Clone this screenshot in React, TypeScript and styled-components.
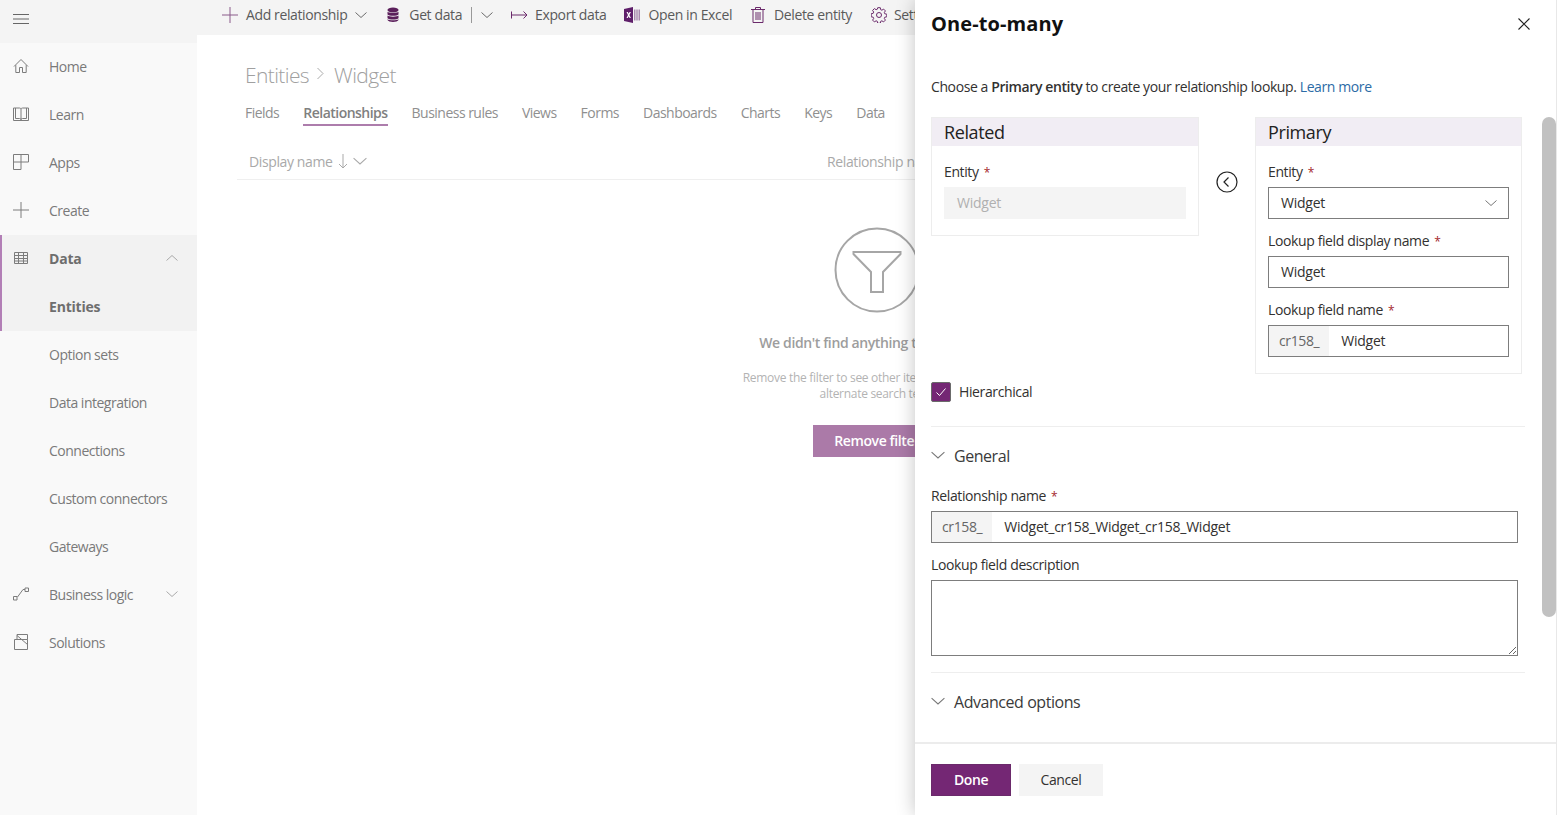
import styled, { createGlobalStyle } from "styled-components";

const GlobalStyle = createGlobalStyle`
  html, body {
    margin: 0;
    height: 100%;
    overflow: hidden;
    background: #fff;
    font-family: "Open Sans", "Noto Sans", sans-serif;
    font-size: 14px;
    letter-spacing: -0.38px;
  }
  * { box-sizing: border-box; }
`;

const Shell = styled.div`
  position: relative;
  display: flex;
  width: 1557px;
  height: 815px;
  overflow: hidden;
`;

/* sidebar */

const Sidebar = styled.nav`
  flex: 0 0 197px;
  background: #f9f9f9;
  letter-spacing: -0.5px;
`;

const MenuBar = styled.div`
  display: flex;
  align-items: center;
  height: 43px;
  padding-left: 13px;
  padding-bottom: 5px;
  background: #f4f4f4;
  color: #666;
`;

const NavGroup = styled.div`
  background: #f2f2f2;
  box-shadow: inset 2px 0 0 #b27fb6;
`;

const NavRow = styled.div<{ $bold?: boolean }>`
  display: flex;
  align-items: center;
  height: 48px;
  padding: 0 19px 2px 13px;
  color: ${(p) => (p.$bold ? "#6e6e6e" : "#7a7a7a")};
  font-weight: ${(p) => (p.$bold ? 700 : 400)};
  letter-spacing: ${(p) => (p.$bold ? "-0.2px" : "inherit")};
`;

const NavIcon = styled.span`
  display: flex;
  justify-content: center;
  width: 16px;
  margin-right: 20px;
  color: #7c7c7c;
`;

const NavLabel = styled.span`
  flex: 1;
  white-space: nowrap;
`;

const NavChevron = styled.span`
  display: flex;
  color: #a0a0a0;
`;

/* main */

const Main = styled.main`
  flex: 1;
  min-width: 0;
`;

const CommandBar = styled.div`
  display: flex;
  align-items: center;
  height: 35px;
  padding: 0 0 6px 25px;
  background: #f4f4f4;
  color: #5a5a5a;
  white-space: nowrap;
`;

const Command = styled.span<{ $gap?: number; $iconGap?: number }>`
  display: inline-flex;
  align-items: center;
  gap: ${(p) => p.$iconGap ?? 8}px;
  margin-right: ${(p) => p.$gap ?? 18}px;
`;

const CommandDivider = styled.span`
  width: 1px;
  height: 16px;
  margin-right: 9px;
  background: #999;
`;

const Content = styled.div`
  padding: 25px 0 0 40px;
`;

const Breadcrumb = styled.div`
  display: flex;
  align-items: center;
  height: 30px;
  padding-left: 8px;
  color: #a0a0a0;
  font-size: 21px;
  font-weight: 300;
  letter-spacing: -0.6px;
`;

const CrumbSeparator = styled.span`
  display: flex;
  margin: 0 10px 4px 8px;
`;

const Tabs = styled.div`
  display: flex;
  gap: 24px;
  margin-top: 13px;
  padding-left: 8px;
  letter-spacing: -0.52px;
`;

const Tab = styled.span<{ $active?: boolean }>`
  height: 23px;
  line-height: 20px;
  color: ${(p) => (p.$active ? "#808080" : "#8f8f8f")};
  font-weight: ${(p) => (p.$active ? 600 : 400)};
  border-bottom: ${(p) => (p.$active ? "2px solid #ad7dac" : "2px solid transparent")};
`;

const ListHead = styled.div`
  display: grid;
  grid-template-columns: 590px 1fr;
  align-items: center;
  height: 35px;
  margin-top: 19px;
  padding-bottom: 2px;
  border-bottom: 1px solid #efefef;
  color: #a9a9a9;
  white-space: nowrap;
`;

const SortColumn = styled.span`
  display: flex;
  align-items: center;
  gap: 5px;
  padding-left: 12px;
`;

const Empty = styled.div`
  display: flex;
  flex-direction: column;
  align-items: center;
  margin-left: -40px;
  padding-top: 47px;
`;

const EmptyTitle = styled.div`
  margin-top: 20px;
  color: #9d9d9d;
  font-weight: 600;
  line-height: 20px;
  white-space: nowrap;
`;

const EmptyText = styled.div`
  width: 290px;
  margin-top: 17px;
  color: #b3b3b3;
  font-size: 12px;
  letter-spacing: -0.3px;
  line-height: 16px;
  text-align: center;
`;

const RemoveButton = styled.div`
  display: flex;
  align-items: center;
  height: 32px;
  margin-top: 23px;
  padding: 0 21px 2px;
  background: #ab7aa8;
  color: #fff;
  font-weight: 600;
`;

/* panel */

const Panel = styled.aside`
  position: absolute;
  top: 0;
  right: 0;
  bottom: 0;
  display: flex;
  flex-direction: column;
  width: 642px;
  background: #fff;
  border-right: 1px solid #e8e8e8;
  box-shadow: 0 0 18px rgba(0, 0, 0, 0.24);
  color: #323130;
`;

const PanelHead = styled.header`
  display: flex;
  align-items: center;
  justify-content: space-between;
  height: 48px;
  padding: 0 26px 0 16px;
`;

const PanelTitle = styled.h1`
  margin: 0 0 1px;
  color: #111;
  font-size: 20px;
  font-weight: 700;
  letter-spacing: 0.1px;
`;

const PanelBody = styled.div`
  flex: 1;
  min-height: 0;
  padding: 29px 31px 0 16px;
  overflow: hidden;
`;

const Intro = styled.p`
  margin: 0;
  letter-spacing: -0.4px;
  line-height: 20px;
  strong { font-weight: 600; }
  a { color: #2c6ba6; }
`;

const Mapping = styled.div`
  display: grid;
  grid-template-columns: 268px 56px 267px;
  align-items: start;
  margin-top: 20px;
`;

const Card = styled.section`
  border: 1px solid #ededed;
`;

const CardHead = styled.h2`
  height: 28px;
  margin: 0;
  padding-left: 12px;
  background: #f1edf4;
  color: #222;
  font-size: 18px;
  font-weight: 400;
  line-height: 28px;
`;

const CardBody = styled.div`
  display: flex;
  flex-direction: column;
  gap: 12px;
  padding: 16px 12px 16px;
`;

const SwapCell = styled.div`
  display: flex;
  justify-content: center;
  padding-top: 54px;
  color: #222;
`;

const Field = styled.div`
  display: flex;
  flex-direction: column;
  gap: 5px;
`;

const Label = styled.label`
  height: 20px;
  color: #323130;
  line-height: 20px;
  white-space: nowrap;
`;

const Required = styled.span`
  margin-left: 5px;
  color: #a4262c;
  font-size: 12px;
  line-height: 0;
`;

const InputBox = styled.div<{ $disabled?: boolean }>`
  display: flex;
  align-items: center;
  height: 32px;
  background: ${(p) => (p.$disabled ? "#f4f4f4" : "#fff")};
  border: 1px solid ${(p) => (p.$disabled ? "transparent" : "#7d7d7d")};
  color: ${(p) => (p.$disabled ? "#b0b0b0" : "#323130")};
`;

const Prefix = styled.span`
  display: flex;
  align-items: center;
  height: 100%;
  padding: 0 10px 2px;
  background: #f4f4f4;
  color: #666;
`;

const InputValue = styled.span`
  flex: 1;
  padding: 0 12px 2px;
  letter-spacing: -0.25px;
`;

const SelectChevron = styled.span`
  display: flex;
  margin-right: 11px;
  color: #666;
`;

const CheckRow = styled.div`
  display: flex;
  align-items: center;
  gap: 8px;
  height: 20px;
  margin-top: 8px;
`;

const CheckText = styled.span`
  padding-bottom: 2px;
`;

const CheckBox = styled.span`
  display: flex;
  align-items: center;
  justify-content: center;
  width: 20px;
  height: 20px;
  background: #742774;
  border: 1px solid #6b6b6b;
  border-radius: 2px;
  color: #fff;
`;

const Divider = styled.hr<{ $top: number }>`
  height: 1px;
  margin: ${(p) => p.$top}px 0 0;
  background: #eee;
  border: 0;
`;

const SectionHead = styled.div`
  display: flex;
  align-items: center;
  gap: 9px;
  height: 24px;
  margin-top: 17px;
  color: #3a3a3a;
  font-size: 16px;
  letter-spacing: -0.45px;
`;

const SectionChevron = styled.span`
  display: flex;
  margin-bottom: 3px;
  color: #777;
`;

const SectionFields = styled.div`
  display: flex;
  flex-direction: column;
  gap: 12px;
  width: 587px;
  margin-top: 18px;
`;

const TextArea = styled.textarea`
  display: block;
  width: 100%;
  height: 76px;
  padding: 6px 12px;
  background: #fff;
  border: 1px solid #7d7d7d;
  border-radius: 0;
  outline: none;
  font: inherit;
  resize: vertical;
`;

const PanelFoot = styled.footer`
  display: flex;
  gap: 8px;
  height: 73px;
  padding: 20px 16px 0;
  border-top: 2px solid #ececec;
`;

const Button = styled.button<{ $primary?: boolean }>`
  height: 32px;
  padding: 0 0 1px;
  width: ${(p) => (p.$primary ? 80 : 84)}px;
  background: ${(p) => (p.$primary ? "#742774" : "#f4f4f4")};
  border: ${(p) => (p.$primary ? "1px solid #6b2a6b" : "none")};
  border-radius: 0;
  color: ${(p) => (p.$primary ? "#fff" : "#323130")};
  font: inherit;
  font-weight: ${(p) => (p.$primary ? 600 : 400)};
  letter-spacing: inherit;
`;

const ScrollThumb = styled.div`
  position: absolute;
  top: 117px;
  right: 0;
  width: 14px;
  height: 500px;
  background: #c1c1c1;
  border-radius: 7px;
`;

/* icons */

type IconProps = { size?: number; children: React.ReactNode; color?: string };

const Icon = ({ size = 16, children, color = "currentColor" }: IconProps) => (
  <svg width={size} height={size} viewBox="0 0 16 16" fill="none" stroke={color} strokeWidth={1} style={{ flex: "none" }}>
    {children}
  </svg>
);

const Chevron = ({ up, size = 12 }: { up?: boolean; size?: number }) => (
  <svg width={size} height={size} viewBox="0 0 12 12" fill="none" stroke="currentColor" strokeWidth={0.9} style={{ flex: "none" }}>
    <path d={up ? "M0.5 8.500 6 3.500l5.500 5" : "M0.5 3.500 6 8.500l5.500-5"} />
  </svg>
);

const HomeIcon = () => (
  <Icon><path d="M1 8.500 8 1.500l7 7M2.800 7.200v7.300h3.700v-5h3v5h3.700V7.200" /></Icon>
);
const BookIcon = () => (
  <Icon><path d="M.5 2h6c.8 0 1.500.4 1.500 1.200C8 2.400 8.700 2 9.500 2h6v12.500H.5zM8 3.200V14.500M2.500 2v10.500h4c.8 0 1.500.5 1.500 1 0-.5.7-1 1.500-1h4V2" /></Icon>
);
const AppsIcon = () => (
  <Icon><path d="M.5.500h15v7.500H8v7.500H.5zM.5 8H8M8 .5V8" /></Icon>
);
const PlusIcon = ({ color }: { color?: string }) => (
  <Icon color={color}><path d="M8 0v16M0 8h16" /></Icon>
);
const TableIcon = () => (
  <Icon><path d="M1.500 2.500h13v11h-13zM1.500 5.500h13M1.500 8.500h13M1.500 11h13M5.500 2.500v11M10.500 2.500v11" /></Icon>
);
const FlowIcon = () => (
  <Icon><path d="M.5 10.500h3.500v3.500H.5zM12 2h3.500v3.500H12zM4.500 11 10 3.500h2" /></Icon>
);
const SolutionsIcon = () => (
  <Icon><path d="M1.500 5.500h13v10h-13zM4 5.500V.5h10.500v5M4 1.500l10.500 9" /></Icon>
);
const DatabaseIcon = () => (
  <svg width="14" height="16" viewBox="0 0 14 16" fill="#5b1f5b" style={{ flex: "none" }}>
    <ellipse cx="7" cy="3" rx="5.500" ry="2.500" />
    <path d="M1.500 4.800C2.500 6.300 11.500 6.300 12.500 4.800v2.600c-1 1.700-10 1.700-11 0zM1.500 8.600c1 1.500 10 1.500 11 0v2.600c-1 1.700-10 1.700-11 0zM1.500 12.200c1 1.500 10 1.500 11 0V13c-1 2.600-10 2.600-11 0z" />
  </svg>
);
const ExportIcon = () => (
  <svg width="17" height="16" viewBox="0 0 17 16" fill="none" stroke="#6b2a6b" strokeWidth={1} style={{ flex: "none" }}>
    <path d="M.5 4.500v7M.5 8h15.500M12.500 4.500 16 8l-3.500 3.500" />
  </svg>
);
const ExcelIcon = () => (
  <svg width="16" height="16" viewBox="0 0 16 16" style={{ flex: "none" }}>
    <path d="M0 2 9 0v16L0 14z" fill="#5f1f6a" />
    <path d="M2.500 5h1.300l.9 1.800L5.600 5h1.300L5.400 8l1.500 3H5.600l-.9-1.800L3.800 11H2.500L4 8z" fill="#fff" />
    <path d="M10 2.500h1.500v11H10zM12.300 2.500h1.400v11h-1.400zM14.500 2.500H16v11h-1.500z" fill="#a88aae" />
  </svg>
);
const TrashIcon = () => (
  <svg width="14" height="16" viewBox="0 0 14 16" fill="none" stroke="#6b2a6b" strokeWidth={1} style={{ flex: "none" }}>
    <path d="M0 2.500h14M2 2.500v13h10v-13M4.500 2.500V.5h5v2M5 5v8M7 5v8M9 5v8" />
  </svg>
);
const GearIcon = () => (
  <svg width="16" height="16" viewBox="0 0 16 16" fill="none" stroke="#6b2a6b" strokeWidth={1} style={{ flex: "none" }}>
    <circle cx="8" cy="8" r="2.500" />
    <path d="M6.700.7h2.600l.4 2 1.200.5 1.700-1.100 1.800 1.800-1.100 1.700.5 1.200 2 .4v2.600l-2 .4-.5 1.200 1.100 1.700-1.800 1.800-1.700-1.100-1.200.5-.4 2H6.700l-.4-2-1.200-.5-1.700 1.100-1.800-1.800 1.100-1.700-.5-1.200-2-.4V6.700l2-.4.5-1.200L1.600 3.400l1.800-1.800 1.700 1.100 1.200-.5z" />
  </svg>
);
const SortDownIcon = () => (
  <svg width="10" height="16" viewBox="0 0 10 16" fill="none" stroke="currentColor" strokeWidth={1} style={{ flex: "none" }}>
    <path d="M5 1v14M1 11l4 4 4-4" />
  </svg>
);
const FilterBadge = () => (
  <svg width="86" height="86" viewBox="0 0 86 86" fill="none" stroke="#a6a6a6" strokeWidth={2} style={{ flex: "none" }}>
    <circle cx="43" cy="43" r="41.500" />
    <path d="M19.500 25h47v2L49 45v20H37V45L19.500 27z" />
  </svg>
);
const SwapIcon = () => (
  <svg width="22" height="22" viewBox="0 0 22 22" fill="none" stroke="currentColor" strokeWidth={1.200}>
    <circle cx="11" cy="11" r="10" />
    <path d="M12.500 6.500 8 11l4.500 4.500" />
  </svg>
);

const navItems = ["Option sets", "Data integration", "Connections", "Custom connectors", "Gateways"];

const tabs = ["Fields", "Relationships", "Business rules", "Views", "Forms", "Dashboards", "Charts", "Keys", "Data"];

export default function App() {
  return (
    <Shell>
      <GlobalStyle />
      <Sidebar>
        <MenuBar>
          <Icon><path d="M0 3.500h16M0 8h16M0 12.500h16" /></Icon>
        </MenuBar>
        <NavRow><NavIcon><HomeIcon /></NavIcon><NavLabel>Home</NavLabel></NavRow>
        <NavRow><NavIcon><BookIcon /></NavIcon><NavLabel>Learn</NavLabel></NavRow>
        <NavRow><NavIcon><AppsIcon /></NavIcon><NavLabel>Apps</NavLabel></NavRow>
        <NavRow><NavIcon><PlusIcon /></NavIcon><NavLabel>Create</NavLabel></NavRow>
        <NavGroup>
          <NavRow $bold><NavIcon><TableIcon /></NavIcon><NavLabel>Data</NavLabel><NavChevron><Chevron up /></NavChevron></NavRow>
          <NavRow $bold><NavIcon /><NavLabel>Entities</NavLabel></NavRow>
        </NavGroup>
        {navItems.map((item) => (
          <NavRow key={item}><NavIcon /><NavLabel>{item}</NavLabel></NavRow>
        ))}
        <NavRow><NavIcon><FlowIcon /></NavIcon><NavLabel>Business logic</NavLabel><NavChevron><Chevron /></NavChevron></NavRow>
        <NavRow><NavIcon><SolutionsIcon /></NavIcon><NavLabel>Solutions</NavLabel></NavRow>
      </Sidebar>

      <Main>
        <CommandBar>
          <Command $gap={19}><PlusIcon color="#8a5a8a" />Add relationship<Chevron /></Command>
          <Command $gap={9} $iconGap={9}><DatabaseIcon />Get data</Command>
          <CommandDivider />
          <Command $gap={18}><Chevron /></Command>
          <Command $iconGap={7}><ExportIcon />Export data</Command>
          <Command $gap={19}><ExcelIcon />Open in Excel</Command>
          <Command $gap={19} $iconGap={9}><TrashIcon />Delete entity</Command>
          <Command $iconGap={7}><GearIcon />Settings</Command>
        </CommandBar>
        <Content>
          <Breadcrumb>
            Entities
            <CrumbSeparator>
              <svg width="7" height="13" viewBox="0 0 7 13" fill="none" stroke="currentColor" strokeWidth={0.9}>
                <path d="M.5 1 6 6.500.5 12" />
              </svg>
            </CrumbSeparator>
            Widget
          </Breadcrumb>
          <Tabs>
            {tabs.map((tab) => (
              <Tab key={tab} $active={tab === "Relationships"}>{tab}</Tab>
            ))}
          </Tabs>
          <ListHead>
            <SortColumn>Display name <SortDownIcon /><Chevron size={14} /></SortColumn>
            <span>Relationship name</span>
          </ListHead>
          <Empty>
            <FilterBadge />
            <EmptyTitle>We didn't find anything to show here</EmptyTitle>
            <EmptyText>Remove the filter to see other items or try using an alternate search term</EmptyText>
            <RemoveButton>Remove filter</RemoveButton>
          </Empty>
        </Content>
      </Main>

      <Panel>
        <PanelHead>
          <PanelTitle>One-to-many</PanelTitle>
          <svg width="12" height="12" viewBox="0 0 12 12" fill="none" stroke="#222" strokeWidth={1.100}>
            <path d="M.5.500l11 11M11.500.500l-11 11" />
          </svg>
        </PanelHead>
        <PanelBody>
          <Intro>
            Choose a <strong>Primary entity</strong> to create your relationship lookup. <a>Learn more</a>
          </Intro>
          <Mapping>
            <Card>
              <CardHead>Related</CardHead>
              <CardBody>
                <Field>
                  <Label>Entity<Required>*</Required></Label>
                  <InputBox $disabled><InputValue>Widget</InputValue></InputBox>
                </Field>
              </CardBody>
            </Card>
            <SwapCell><SwapIcon /></SwapCell>
            <Card>
              <CardHead>Primary</CardHead>
              <CardBody>
                <Field>
                  <Label>Entity<Required>*</Required></Label>
                  <InputBox>
                    <InputValue>Widget</InputValue>
                    <SelectChevron><Chevron /></SelectChevron>
                  </InputBox>
                </Field>
                <Field>
                  <Label>Lookup field display name<Required>*</Required></Label>
                  <InputBox><InputValue>Widget</InputValue></InputBox>
                </Field>
                <Field>
                  <Label>Lookup field name<Required>*</Required></Label>
                  <InputBox><Prefix>cr158_</Prefix><InputValue>Widget</InputValue></InputBox>
                </Field>
              </CardBody>
            </Card>
          </Mapping>
          <CheckRow>
            <CheckBox>
              <svg width="12" height="12" viewBox="0 0 12 12" fill="none" stroke="#fff" strokeWidth={1}>
                <path d="M1.500 6.500 4.500 9.500 10.500 2.500" />
              </svg>
            </CheckBox>
            <CheckText>Hierarchical</CheckText>
          </CheckRow>
          <Divider $top={24} />
          <SectionHead><SectionChevron><Chevron size={14} /></SectionChevron>General</SectionHead>
          <SectionFields>
            <Field>
              <Label>Relationship name<Required>*</Required></Label>
              <InputBox><Prefix>cr158_</Prefix><InputValue>Widget_cr158_Widget_cr158_Widget</InputValue></InputBox>
            </Field>
            <Field>
              <Label>Lookup field description</Label>
              <TextArea readOnly />
            </Field>
          </SectionFields>
          <Divider $top={16} />
          <SectionHead><SectionChevron><Chevron size={14} /></SectionChevron>Advanced options</SectionHead>
        </PanelBody>
        <PanelFoot>
          <Button $primary>Done</Button>
          <Button>Cancel</Button>
        </PanelFoot>
        <ScrollThumb />
      </Panel>
    </Shell>
  );
}
